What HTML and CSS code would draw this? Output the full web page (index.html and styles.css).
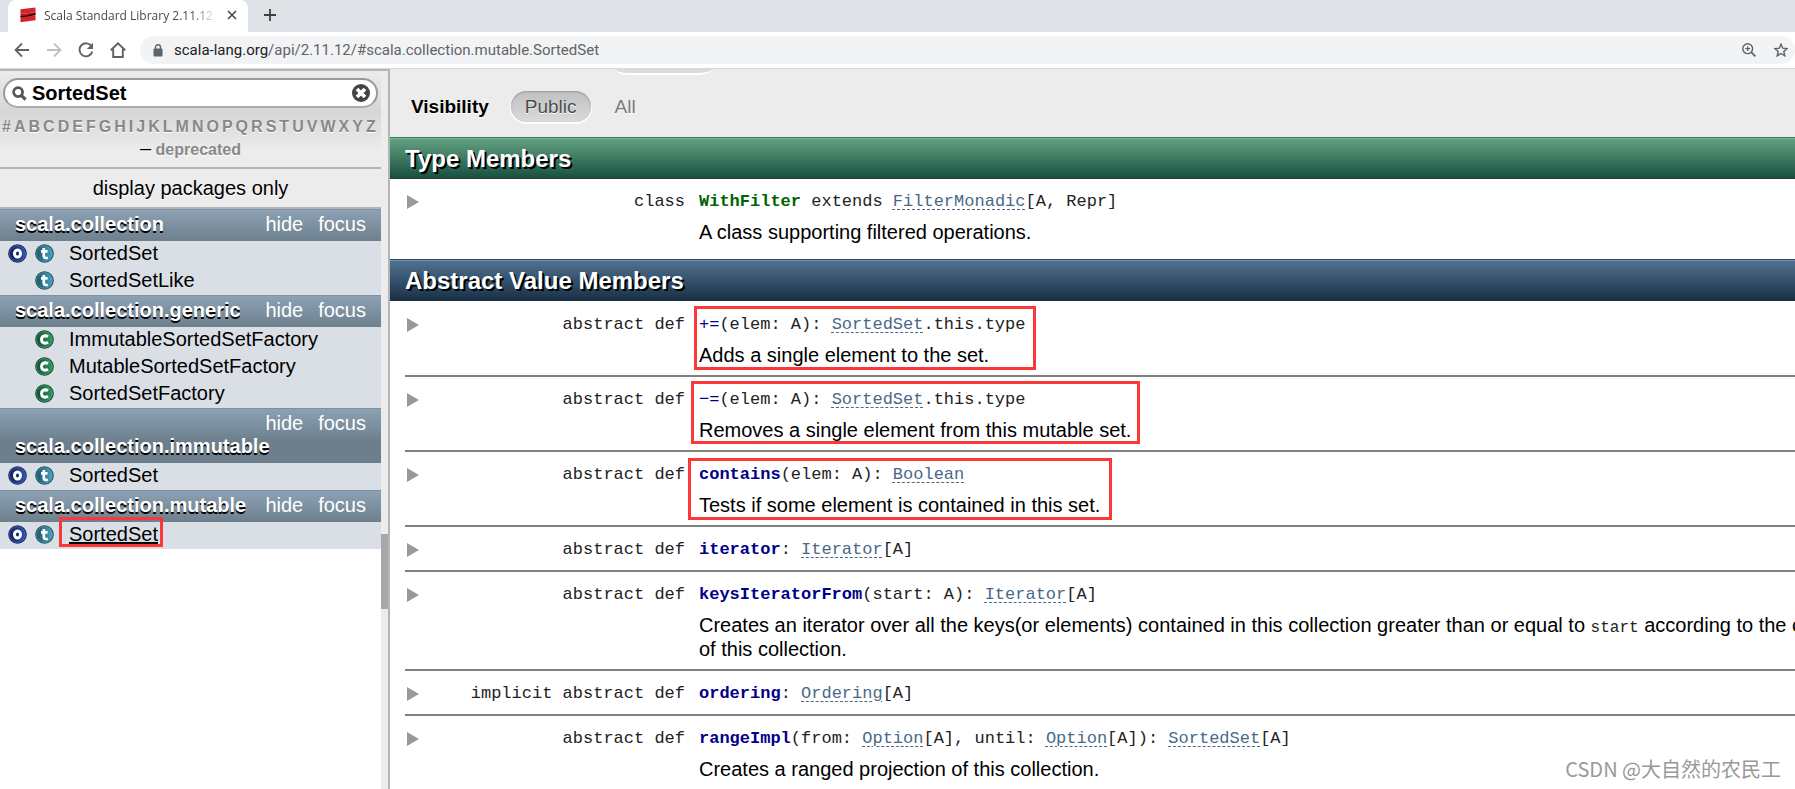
FILE: index.html
```html
<!DOCTYPE html>
<html lang="en">
<head>
<meta charset="utf-8">
<title>Scala Standard Library 2.11.12</title>
<link rel="stylesheet" href="styles.css">
</head>
<body>
<svg class="defs" aria-hidden="true">
  <defs>
    <linearGradient id="gTrait" x1="0" y1="0" x2="1" y2="0"><stop offset="0" stop-color="#19576b"/><stop offset="1" stop-color="#4aa3c4"/></linearGradient>
    <linearGradient id="gObject" x1="0" y1="0" x2="1" y2="0"><stop offset="0" stop-color="#101f5c"/><stop offset="1" stop-color="#2c55b5"/></linearGradient>
    <linearGradient id="gClass" x1="0" y1="0" x2="1" y2="0"><stop offset="0" stop-color="#0d4f30"/><stop offset="1" stop-color="#2f9a62"/></linearGradient>
    <symbol id="trait" viewBox="0 0 19 19"><circle cx="9.500" cy="9.500" r="9.300" fill="#174a5c"/><circle cx="9.500" cy="9.500" r="8" fill="url(#gTrait)" stroke="#6f9dad" stroke-width=".6"/><path d="M8.800 4v7.800q0 2.200 2.200 2.200h1.800M6 7.300h6.600" fill="none" stroke="#fff" stroke-width="2.700"/></symbol>
    <symbol id="object" viewBox="0 0 19 19"><circle cx="9.500" cy="9.500" r="9.300" fill="#101f5c"/><circle cx="9.500" cy="9.500" r="8" fill="url(#gObject)" stroke="#6878b4" stroke-width=".6"/><ellipse cx="9.500" cy="9.500" rx="3" ry="3.500" fill="#14256b" stroke="#fff" stroke-width="3"/></symbol>
    <symbol id="class" viewBox="0 0 19 19"><circle cx="9.500" cy="9.500" r="9.300" fill="#0c4027"/><circle cx="9.500" cy="9.500" r="8" fill="url(#gClass)" stroke="#6fae8c" stroke-width=".6"/><path d="M13 6.700q-1.300-.9-2.900-.9-3.500.2-3.600 3.700.1 3.500 3.600 3.700 1.600 0 2.900-.9" fill="none" stroke="#fff" stroke-width="2.900"/></symbol>
  </defs>
</svg>

<header class="browser">
  <div class="tabs">
    <div class="tab">
      <svg class="logo" viewBox="0 0 17 17"><path d="M0.500 2.500L16.500 0.500V5.500L0.500 7.500z" fill="#d4232b"/><path d="M0.500 11L16.500 9V14L0.500 16.200z" fill="#d4232b"/><path d="M0.500 7.500L16.500 5.500V9L0.500 11z" fill="#b81a22"/><path d="M0.500 9.500Q8 9.500 16.500 6V8Q10 10.500 0.500 11z" fill="#250608"/></svg>
      <span class="tab-title">Scala Standard Library 2.11.12</span>
      <button class="icon-button" aria-label="Close tab"><svg width="10" height="10" viewBox="0 0 10 10"><path d="M1 1l8 8M9 1l-8 8" stroke="#45494d" stroke-width="1.600"/></svg></button>
    </div>
    <button class="icon-button new-tab" aria-label="New tab"><svg width="12" height="12" viewBox="0 0 12 12"><path d="M6 0v12M0 6h12" stroke="#3c4043" stroke-width="1.800"/></svg></button>
  </div>
  <div class="toolbar">
    <nav class="nav-buttons">
      <button class="icon-button" aria-label="Back"><svg width="16" height="16" viewBox="0 0 16 16"><path d="M15 8H2M8 1.500L1.500 8 8 14.500" fill="none" stroke="#5f6368" stroke-width="1.800"/></svg></button>
      <button class="icon-button" aria-label="Forward"><svg width="16" height="16" viewBox="0 0 16 16"><path d="M1 8h13M8 1.500L14.500 8 8 14.500" fill="none" stroke="#bdc1c6" stroke-width="1.800"/></svg></button>
      <button class="icon-button" aria-label="Reload"><svg width="16" height="16" viewBox="0 0 16 16"><path d="M13.600 4.500A6.500 6.500 0 1 0 14.300 9.500" fill="none" stroke="#5f6368" stroke-width="1.900"/><path d="M15 0.800V7H8.800z" fill="#5f6368"/></svg></button>
      <button class="icon-button" aria-label="Home"><svg width="16" height="16" viewBox="0 0 16 16"><path d="M0.800 8.300L8 1.300l7.200 7M3.200 7v8h9.600V7" fill="none" stroke="#5f6368" stroke-width="1.900"/></svg></button>
    </nav>
    <div class="address">
      <svg width="10" height="13" viewBox="0 0 10 13"><rect x="0.500" y="4.500" width="9" height="8" rx="1" fill="#5f6368"/><path d="M2.500 5V3.200a2.500 2.500 0 0 1 5 0V5" fill="none" stroke="#5f6368" stroke-width="1.400"/></svg>
      <span class="url"><b>scala-lang.org</b>/api/2.11.12/#scala.collection.mutable.SortedSet</span>
      <button class="icon-button" aria-label="Zoom"><svg width="14" height="14" viewBox="0 0 14 14"><circle cx="5.700" cy="5.700" r="4.900" fill="none" stroke="#5f6368" stroke-width="1.400"/><path d="M9.200 9.200l4.200 4.200" stroke="#5f6368" stroke-width="1.800"/><path d="M5.700 3.300v4.800M3.300 5.700h4.800" stroke="#5f6368" stroke-width="1.200"/></svg></button>
      <button class="icon-button" aria-label="Bookmark"><svg width="14" height="14" viewBox="0 0 14 14"><path d="M7 1.200l1.700 4 4.400.4-3.300 2.900 1 4.300L7 10.500l-3.800 2.300 1-4.300L.9 5.600l4.400-.4z" fill="none" stroke="#5f6368" stroke-width="1.400"/></svg></button>
    </div>
  </div>
</header>

<div class="page">
  <aside class="sidebar">
    <div class="side-content">
      <div class="filter">
        <div class="search">
          <svg width="15" height="15" viewBox="0 0 16 16"><circle cx="6.500" cy="6.500" r="4.800" fill="none" stroke="#555" stroke-width="2.900"/><path d="M10 10l4.500 4.500" stroke="#555" stroke-width="3.400"/></svg>
          <input type="text" value="SortedSet" aria-label="Search">
          <button class="icon-button" aria-label="Clear"><svg width="18" height="18" viewBox="0 0 18 18"><circle cx="9" cy="9" r="9" fill="#444"/><path d="M5 5l8 8M13 5l-8 8" stroke="#fff" stroke-width="3.800"/></svg></button>
        </div>
        <div class="letters"><a href="#">#</a><a href="#">A</a><a href="#">B</a><a href="#">C</a><a href="#">D</a><a href="#">E</a><a href="#">F</a><a href="#">G</a><a href="#">H</a><a href="#">I</a><a href="#">J</a><a href="#">K</a><a href="#">L</a><a href="#">M</a><a href="#">N</a><a href="#">O</a><a href="#">P</a><a href="#">Q</a><a href="#">R</a><a href="#">S</a><a href="#">T</a><a href="#">U</a><a href="#">V</a><a href="#">W</a><a href="#">X</a><a href="#">Y</a><a href="#">Z</a></div>
        <div class="deprecated"><span>–</span> <a href="#">deprecated</a></div>
      </div>
      <a class="packages-only" href="#">display packages only</a>

      <section>
        <h3><span>scala.collection</span><span class="actions"><a href="#">hide</a><a href="#">focus</a></span></h3>
        <ol>
          <li><svg><use href="#object"/></svg><svg><use href="#trait"/></svg><a href="#">SortedSet</a></li>
          <li><svg></svg><svg><use href="#trait"/></svg><a href="#">SortedSetLike</a></li>
        </ol>
      </section>
      <section>
        <h3><span>scala.collection.generic</span><span class="actions"><a href="#">hide</a><a href="#">focus</a></span></h3>
        <ol>
          <li><svg></svg><svg><use href="#class"/></svg><a href="#">ImmutableSortedSetFactory</a></li>
          <li><svg></svg><svg><use href="#class"/></svg><a href="#">MutableSortedSetFactory</a></li>
          <li><svg></svg><svg><use href="#class"/></svg><a href="#">SortedSetFactory</a></li>
        </ol>
      </section>
      <section>
        <h3><span>scala.collection.immutable</span><span class="actions"><a href="#">hide</a><a href="#">focus</a></span></h3>
        <ol>
          <li><svg><use href="#object"/></svg><svg><use href="#trait"/></svg><a href="#">SortedSet</a></li>
        </ol>
      </section>
      <section>
        <h3><span>scala.collection.mutable</span><span class="actions"><a href="#">hide</a><a href="#">focus</a></span></h3>
        <ol>
          <li><svg><use href="#object"/></svg><svg><use href="#trait"/></svg><a class="current" href="#">SortedSet</a><i class="mark mark-link"></i></li>
        </ol>
      </section>
    </div>
    <div class="scroll"><div class="thumb"></div></div>
  </aside>

  <main class="template">
    <div class="visibility">
      <span class="clipped-pill"></span>
      <strong>Visibility</strong>
      <button class="pill selected">Public</button>
      <button class="pill">All</button>
    </div>

    <section class="types">
      <h2>Type Members</h2>
      <ol class="members">
        <li>
          <span class="arrow"></span><span class="kind">class</span>
          <div class="symbol"><code><b>WithFilter</b> extends <a href="#">FilterMonadic</a>[A, Repr]</code>
          <p>A class supporting filtered operations.</p></div>
        </li>
      </ol>
    </section>

    <section class="values">
      <h2>Abstract Value Members</h2>
      <ol class="members">
        <li>
          <span class="arrow"></span><span class="kind">abstract def</span>
          <div class="symbol"><code><b class="operator">+=</b>(elem: A): <a href="#">SortedSet</a>.this.type</code>
          <p>Adds a single element to the set.</p><i class="mark mark-add"></i></div>
        </li>
        <li>
          <span class="arrow"></span><span class="kind">abstract def</span>
          <div class="symbol"><code><b class="operator">−=</b>(elem: A): <a href="#">SortedSet</a>.this.type</code>
          <p>Removes a single element from this mutable set.</p><i class="mark mark-remove"></i></div>
        </li>
        <li>
          <span class="arrow"></span><span class="kind">abstract def</span>
          <div class="symbol"><code><b>contains</b>(elem: A): <a href="#">Boolean</a></code>
          <p>Tests if some element is contained in this set.</p><i class="mark mark-contains"></i></div>
        </li>
        <li>
          <span class="arrow"></span><span class="kind">abstract def</span>
          <div class="symbol"><code><b>iterator</b>: <a href="#">Iterator</a>[A]</code></div>
        </li>
        <li>
          <span class="arrow"></span><span class="kind">abstract def</span>
          <div class="symbol"><code><b>keysIteratorFrom</b>(start: A): <a href="#">Iterator</a>[A]</code>
          <p>Creates an iterator over all the keys(or elements) contained in this collection greater than or equal to <code class="inline">start</code> according to the ordering<br>of this collection.</p></div>
        </li>
        <li>
          <span class="arrow"></span><span class="kind">implicit abstract def</span>
          <div class="symbol"><code><b>ordering</b>: <a href="#">Ordering</a>[A]</code></div>
        </li>
        <li>
          <span class="arrow"></span><span class="kind">abstract def</span>
          <div class="symbol"><code><b>rangeImpl</b>(from: <a href="#">Option</a>[A], until: <a href="#">Option</a>[A]): <a href="#">SortedSet</a>[A]</code>
          <p>Creates a ranged projection of this collection.</p></div>
        </li>
      </ol>
    </section>
  </main>
</div>
<div class="watermark">CSDN @大自然的农民工</div>
</body>
</html>
```
FILE: styles.css
```css
* { box-sizing: border-box; }
body {
  margin: 0;
  height: 100vh;
  display: flex;
  flex-direction: column;
  overflow: hidden;
  position: relative;
  background: #fff;
  color: #000;
  font-family: "Liberation Sans", Arial, sans-serif;
  font-size: 20px;
  line-height: 23px;
}
a { color: inherit; text-decoration: none; }
ol { list-style: none; margin: 0; padding: 0; }
h2, h3, p { margin: 0; }
.defs { position: absolute; width: 0; height: 0; }
.icon-button { display: flex; flex: none; padding: 0; border: 0; background: none; }

/* Browser frame */
.browser { flex: none; font-family: "Open Sans", "Noto Sans", sans-serif; border-bottom: 1px solid #d6d8dc; }
.tabs { display: flex; align-items: center; height: 32px; padding-left: 8px; background: #dee1e6; }
.tab { display: flex; align-items: center; width: 240px; height: 32px; padding: 0 11px 2px 12px; background: #fff; border-radius: 8px 8px 0 0; }
.logo { flex: none; width: 16px; height: 16px; margin-right: 8px; }
.tab-title {
  flex: 1;
  overflow: hidden;
  white-space: nowrap;
  font-size: 12px;
  margin-right: 10px;
  color: #45494d;
  -webkit-mask-image: linear-gradient(90deg, #000 85%, transparent);
  mask-image: linear-gradient(90deg, #000 85%, transparent);
}
.new-tab { margin: 0 0 2px 16px; }
.toolbar { display: flex; align-items: center; height: 36px; padding-left: 14px; }
.nav-buttons { display: flex; gap: 16px; margin-right: 14px; }
.address { flex: 1; display: flex; align-items: center; height: 28px; padding: 0 7px 0 13px; border-radius: 14px; background: #f1f3f4; }
.url { flex: 1; margin-left: 11px; font-family: Roboto, "Open Sans", sans-serif; font-size: 15px; color: #5f6368; }
.url b { font-weight: 400; color: #202124; }
.address .icon-button { margin-left: 18px; }

/* Sidebar */
.page { flex: 1; min-height: 0; display: flex; }
.sidebar { flex: none; width: 390px; display: flex; border-top: 2px solid #b4b4b4; border-right: 2px solid #b4b4b4; background: #ececec; }
.side-content { flex: 1; background: #fff; }
.filter { padding: 7px 3px 6px; background: linear-gradient(#ececec, #d6d6d6 40px, #ececec 80px); border-bottom: 2px solid #b4b4b4; }
.search { display: flex; align-items: center; height: 30px; padding: 0 6px 0 7px; background: #fff; border: 2px solid #999; border-bottom-color: #aaa; border-radius: 15px; }
.search input { flex: 1; min-width: 0; margin: 0; padding: 0 0 0 5px; border: 0; background: none; font: bold 20px "Liberation Sans", Arial, sans-serif; color: #000; }
.letters { display: flex; justify-content: space-between; margin: 7px 2px 0 -1px; }
.letters, .deprecated { font-size: 16px; font-weight: bold; color: #888; text-shadow: 0 1px 0 #fff; }
.deprecated { text-align: center; color: #000; }
.deprecated span { font-size: 20px; line-height: 20px; font-weight: 400; }
.deprecated a { color: #888; }
.packages-only { display: block; padding: 8px 0 7px; text-align: center; background: #ececec; border-bottom: 2px solid #b4b4b4; text-shadow: 0 1px 0 #fff; }
h3 {
  display: flex;
  flex-wrap: wrap-reverse;
  column-gap: 12px;
  padding: 3px 15px 5px;
  font-size: 20px;
  color: #fff;
  background: linear-gradient(#8ca1b4, #6d7f8c 32px);
  border-top: 1px solid #7c8fa3;
}
h3 > span:first-child { text-shadow: 0 2px 0 #000; }
.actions { display: flex; gap: 15px; margin-left: auto; font-weight: 400; }
.side-content li { position: relative; display: flex; align-items: center; gap: 8px; height: 27px; padding: 0 8px 2px; background: #dadfe6; }
.side-content li svg { width: 19px; height: 19px; }
.side-content li a { margin-left: 7px; }
.side-content .current { text-decoration: underline; }
.scroll { width: 7px; padding-top: 463px; }
.thumb { height: 75px; background: #a8a8a8; }

/* Template */
.template { flex: 1; min-width: 0; overflow: hidden; }
.visibility { position: relative; display: flex; align-items: center; height: 68px; padding: 7px 0 0 21px; background: #ececec; }
.visibility strong { margin-right: 22px; font-size: 19px; text-shadow: 0 1px 0 #fff; }
.pill { height: 31px; padding: 0 14px; margin-right: 10px; border: 0; border-radius: 16px; background: none; color: #7a7a7a; font: 19px "Liberation Sans", Arial, sans-serif; text-shadow: 0 1px 0 #fff; }
.selected { color: #4c4c4c; background: linear-gradient(#c0c0c0, #dadada); box-shadow: inset 0 1px 2px #999, 0 1px 1px 1px #fff; }
.clipped-pill { position: absolute; left: 225px; top: 0; width: 97px; height: 6px; background: #dcdcdc; border-bottom: 2px solid #fff; border-radius: 0 0 14px 14px / 0 0 6px 6px; }
h2 { height: 42px; padding: 7px 0 0 15px; font-size: 24px; line-height: 28px; color: #fff; text-shadow: 2px 2px 0 #000; }
.types h2 { background: linear-gradient(#65a283, #18503f); border-top: 1px solid #2f7f53; border-bottom: 1px solid #2c3b38; box-shadow: inset 0 1px 0 #7db496; }
.values h2 { background: linear-gradient(#507392, #192f44); border-top: 1px solid #2a435c; box-shadow: inset 0 1px 0 #7593b0; }
.members { padding-left: 15px; }
.types .members { padding-bottom: 7px; }
.values .members { padding-top: 1px; }
.members li { display: flex; align-items: flex-start; padding: 11px 0 9px; border-bottom: 2px solid #808080; }
.members li:last-child { border-bottom: 0; }
.arrow { flex: none; width: 12px; height: 14px; margin: 5px 0 0 2px; background: #999; clip-path: polygon(0 0, 100% 50%, 0 100%); }
.kind { flex: none; width: 266px; text-align: right; }
.kind, code { font-family: "Liberation Mono", "Courier New", monospace; font-size: 17px; color: #222; }
.symbol { position: relative; flex: 1; min-width: 0; margin-left: 14px; white-space: nowrap; }
.symbol > code { display: block; }
.symbol p { margin: 8px 0 -1px; }
.symbol code.inline { font-size: 16px; line-height: 20px; }
.types b { color: #006400; }
.values b { color: #00008b; }
.values .operator { font-weight: 400; }
.members a { color: #4a6987; text-decoration: underline dashed 1px; text-underline-offset: 3px; }

/* Highlights */
.mark { position: absolute; border: 3px solid #fa3838; }
.mark-link { left: 59px; top: -5px; width: 104px; height: 30px; }
.mark-add { left: -5px; top: -7px; width: 342px; height: 64px; }
.mark-remove { left: -8px; top: -7px; width: 449px; height: 63px; }
.mark-contains { left: -11px; top: -5px; width: 424px; height: 62px; }
.watermark { position: absolute; right: 14px; bottom: 6px; font-family: "Noto Sans CJK SC", sans-serif; font-size: 20px; line-height: 28px; color: #999; }
```
